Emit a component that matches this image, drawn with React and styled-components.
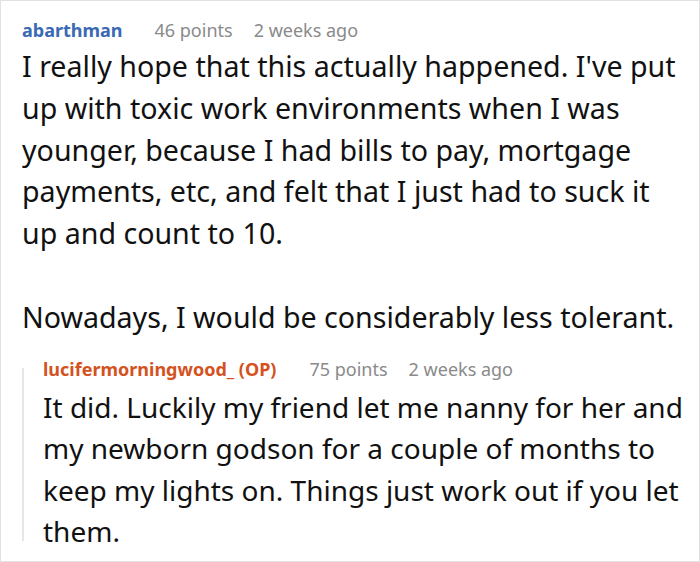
import styled, { createGlobalStyle } from "styled-components";

const GlobalStyle = createGlobalStyle`
  html, body {
    margin: 0;
    padding: 0;
    background: #ffffff;
  }
  body {
    font-family: "Noto Sans", "Open Sans", sans-serif;
  }
`;

// lines are kept as in the screenshot so the wrapping matches
const comment = {
  author: "abarthman",
  points: "46 points",
  time: "2 weeks ago",
  paragraphs: [
    [
      "I really hope that this actually happened. I've put",
      "up with toxic work environments when I was",
      "younger, because I had bills to pay, mortgage",
      "payments, etc, and felt that I just had to suck it",
      "up and count to 10.",
    ],
    ["Nowadays, I would be considerably less tolerant."],
  ],
  reply: {
    author: "lucifermorningwood_ (OP)",
    points: "75 points",
    time: "2 weeks ago",
    paragraphs: [
      [
        "It did. Luckily my friend let me nanny for her and",
        "my newborn godson for a couple of months to",
        "keep my lights on. Things just work out if you let",
        "them.",
      ],
    ],
  },
};

const App = () => {
  const { reply } = comment;
  return (
    <>
      <GlobalStyle />
      <Card>
        <Header>
          <Author>{comment.author}</Author>
          <Meta>{comment.points}</Meta>
          <Meta>{comment.time}</Meta>
        </Header>
        <Body>
          {comment.paragraphs.map((lines, i) => (
            <Paragraph key={i}>
              {lines.map((l, j) => (
                <Line key={j}>{l}</Line>
              ))}
            </Paragraph>
          ))}
        </Body>
        <Reply>
          <ThreadLine />
          <ReplyContent>
            <Header>
              <Author $op>{reply.author}</Author>
              <Meta>{reply.points}</Meta>
              <Meta>{reply.time}</Meta>
            </Header>
            <Body $reply>
              {reply.paragraphs.map((lines, i) => (
                <Paragraph key={i}>
                  {lines.map((l, j) => (
                    <Line key={j}>{l}</Line>
                  ))}
                </Paragraph>
              ))}
            </Body>
          </ReplyContent>
        </Reply>
      </Card>
    </>
  );
};

const Card = styled.div`
  box-sizing: border-box;
  width: 700px;
  height: 562px;
  border: 1px solid #e2e2e2;
  padding: 16px 20px 0 21px;
  overflow: hidden;
`;

const Header = styled.div`
  display: flex;
  align-items: center;
  height: 26px;
  font-size: 18px;
  line-height: 26px;
  white-space: nowrap;
`;

const Author = styled.span`
  font-weight: 700;
  color: ${(p) => (p.$op ? "#d4521e" : "#3a6ab4")};
  margin-right: ${(p) => (p.$op ? "33px" : "32px")};
`;

const Meta = styled.span`
  color: #8a8a8a;
  margin-right: 21px;
`;

const Body = styled.div`
  margin-top: ${(p) => (p.$reply ? "5px" : "2px")};
  font-size: ${(p) => (p.$reply ? "28px" : "28.6px")};
  line-height: ${(p) => (p.$reply ? "41.4px" : "41.8px")};
  color: #111111;
`;

const Paragraph = styled.p`
  margin: 0;
  & + & {
    margin-top: 42px;
  }
`;

const Line = styled.span`
  display: block;
  white-space: nowrap;
`;

const Reply = styled.div`
  display: flex;
  margin-top: 18px;
`;

const ThreadLine = styled.div`
  flex: 0 0 2px;
  background: #e6e6e6;
  margin: 12px 0 11px;
`;

const ReplyContent = styled.div`
  flex: 1;
  padding-left: 19px;
`;

export default App;
